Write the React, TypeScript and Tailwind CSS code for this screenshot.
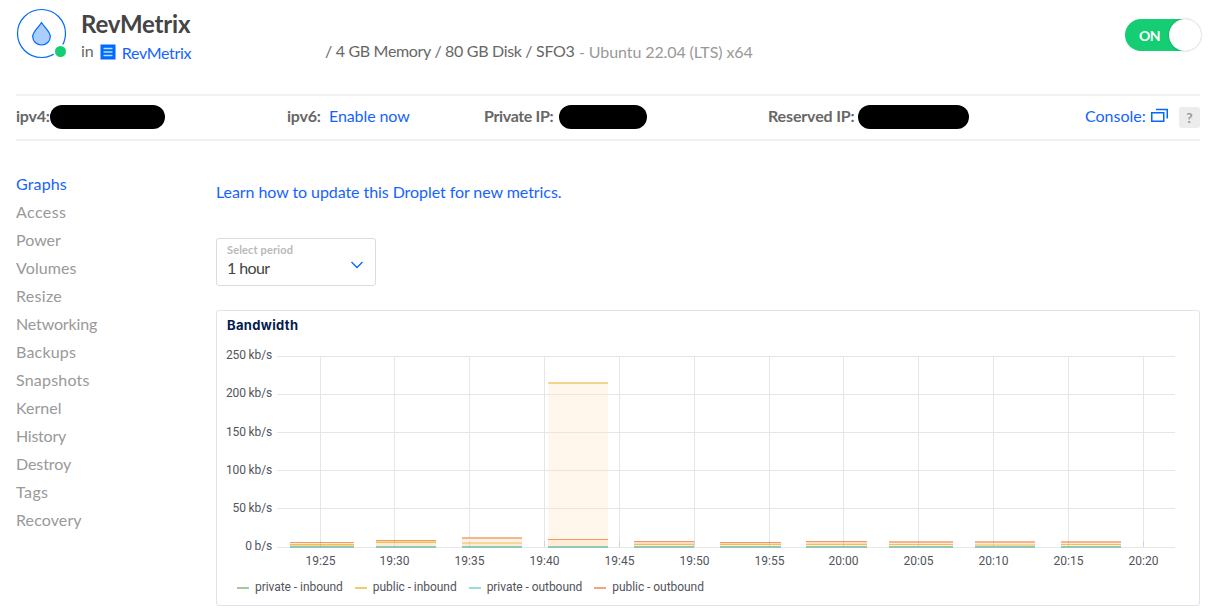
import React from "react";

const NAV: [string, string][] = [
  ["Graphs", "tracking-[0.15px] text-[#1463ff]"], ["Access", "tracking-[0.4px]"], ["Power", ""], ["Volumes", "tracking-[0.1px]"],
  ["Resize", "tracking-[0.3px]"], ["Networking", "tracking-[-0.15px]"], ["Backups", "tracking-[0.2px]"], ["Snapshots", "tracking-[0.2px]"],
  ["Kernel", ""], ["History", "tracking-[-0.25px]"], ["Destroy", "tracking-[-0.1px]"], ["Tags", "tracking-[0.4px]"], ["Recovery", "tracking-[0.1px]"],
];
const TICKS: [number, string][] = [
  [320, "19:25"], [394, "19:30"], [469, "19:35"], [544, "19:40"], [619, "19:45"], [694, "19:50"],
  [769, "19:55"], [843, "20:00"], [918, "20:05"], [993, "20:10"], [1068, "20:15"], [1143, "20:20"],
];
const ROWS: [number, number, string][] = [
  [356, 359, "250 kb/s"], [394, 397, "200 kb/s"], [432, 436, "150 kb/s"], [470, 474, "100 kb/s"], [508, 512, "50 kb/s"], [547, 550, "0 b/s"],
];

type Band = [number, number, string];
const O = "#f5985f", OL = "#f7b491", Y = "#f0c05c", YL = "#f6d896", C = "#fdecd6";
const BARS: { x: number; w: number; bands: Band[] }[] = [
  { x: 290, w: 64, bands: [[542, 1, O], [543, 1, C], [544, 1, Y], [545, 1, YL]] },
  { x: 376, w: 60, bands: [[540, 1, O], [541, 1, YL], [542, 1, Y], [543, 3, C]] },
  { x: 462, w: 60, bands: [[537, 2, OL], [539, 3, "#fdf1ea"], [542, 2, YL], [544, 2, C]] },
  { x: 548, w: 60, bands: [[382, 2, "#f3d68b"], [384, 155, "#fff7eb"], [539, 1, O], [540, 6, C]] },
  { x: 634, w: 60, bands: [[541, 1, O], [542, 2, "#fadcc4"], [544, 1, Y], [545, 1, C]] },
  { x: 720, w: 61, bands: [[542, 1, O], [543, 1, "#fadcc4"], [544, 1, Y], [545, 1, C]] },
  { x: 806, w: 61, bands: [[541, 1, O], [542, 2, "#fadcc4"], [544, 1, Y], [545, 1, C]] },
  { x: 889, w: 64, bands: [[541, 2, OL], [543, 1, C], [544, 1, Y], [545, 1, C]] },
  { x: 975, w: 60, bands: [[541, 2, OL], [543, 1, C], [544, 2, YL]] },
  { x: 1061, w: 60, bands: [[541, 2, OL], [543, 1, C], [544, 1, Y], [545, 1, C]] },
];

const LEGEND: [string, string][] = [
  ["private - inbound", "#a3c99a"], ["public - inbound", "#efcb6b"], ["private - outbound", "#9adbe8"], ["public - outbound", "#f4a67a"],
];

function Redacted({ className }: { className: string }) {
  return <span className={`mt-px block h-6 rounded-full bg-black ${className}`} />;
}

function Chart() {
  return (
    <svg className="block font-['Roboto',sans-serif]" width="982" height="234" viewBox="217 340 982 234" fontSize="12" fill="#52545c">
      <g shapeRendering="crispEdges">
        {ROWS.map(([y]) => <rect key={y} x="277" y={y} width="898" height="1" fill="#e6e6e6" />)}
        {TICKS.map(([x]) => <rect key={x} x={x} y="356" width="1" height="191" fill="#e6e6e6" />)}
        {BARS.map((b) => (
          <g key={b.x}>
            {b.bands.map(([y, h, c]) => <rect key={y} x={b.x} y={y} width={b.w} height={h} fill={c} />)}
            <rect x={b.x} y="546" width={b.w} height="2" fill="#90c8ba" />
          </g>
        ))}
        {ROWS.slice(1, 5).map(([y]) => <rect key={y} x="548" y={y} width="60" height="1" fill="#ebe4da" />)}
        {TICKS.map(([x]) => <rect key={x} x={x} y="541" width="1" height="6" fill="#000" fillOpacity="0.08" />)}
      </g>
      <g letterSpacing="-0.15">
        {ROWS.map(([, y, t]) => <text key={t} x="272" y={y} textAnchor="end">{t}</text>)}
      </g>
      {TICKS.map(([x, t]) => <text key={t} x={x + 0.5} y="565" textAnchor="middle">{t}</text>)}
    </svg>
  );
}

export default function App() {
  return (
    <div className="h-[611px] w-[1214px] overflow-hidden bg-white pr-3.5 pl-4 font-['Lato',sans-serif] text-[16px] text-[#676767]">
      <header className="flex h-[94px] items-start">
        <svg className="mt-2 h-[52px] w-[52px] shrink-0" viewBox="16 8 52 52">
          <circle cx="41.5" cy="33.5" r="24" fill="none" stroke="#0069ff" strokeWidth="1.2" />
          <path d="M41.500 22.500C39 27 32.700 31.500 32.700 36.500a8.800 8.500 0 0 0 17.600 0C50.300 31.500 44 27 41.500 22.500Z" fill="#a9ceff" stroke="#0069ff" strokeWidth="1.200" strokeLinejoin="round" />
          <circle cx="60.500" cy="51.500" r="7.500" fill="#fff" />
          <circle cx="60.500" cy="51.500" r="5.500" fill="#15cd72" />
        </svg>
        <div className="ml-[13px] w-[244px] pt-2">
          <h1 className="text-[24px] leading-8 font-bold tracking-[-0.2px] text-[#444]">RevMetrix</h1>
          <div className="flex h-[22px] items-center">
            <span>in</span>
            <svg className="mt-0.5 ml-1.5 h-4 w-4" viewBox="0 0 16 16">
              <rect x=".5" y=".5" width="15" height="15" fill="#0069ff" />
              <path d="M3.500 4.500h9M3.500 8h9M3.500 11.500h9" stroke="#b0e4ff" strokeWidth="1.500" />
            </svg>
            <a className="mt-[3px] ml-1.5 tracking-[-0.3px] text-[#1463ff]">RevMetrix</a>
          </div>
        </div>
        <div className="flex items-baseline pt-[39px]">
          <span className="w-[254px] tracking-[-0.32px] whitespace-pre">/ 4 GB Memory / 80 GB Disk / SFO3</span>
          <span className="relative top-px tracking-[-0.1px] whitespace-pre text-[#999]">- Ubuntu 22.04 (LTS) x64</span>
        </div>
        <div className="mt-[19px] ml-auto flex h-8 w-[75px] items-center rounded-full bg-[#15cd72] pl-3.5 text-[14px] font-bold tracking-[-0.5px] text-white">
          <span>ON</span>
          <span className="-mr-px ml-auto h-8 w-8 shrink-0 rounded-full bg-white shadow-[0_0_2px_rgba(0,0,0,0.3)]" />
        </div>
      </header>

      <section className="flex h-[47px] items-center border-y-2 border-[#f1f1f1] pb-[3px]">
        <div className="flex w-[271px] items-center"><b className="w-[34px] tracking-[-0.2px] whitespace-nowrap">ipv4:</b><Redacted className="w-[115px]" /></div>
        <div className="flex w-[197px] items-center"><b className="w-[42px] tracking-[-0.2px]">ipv6:</b><a className="tracking-[-0.1px] text-[#1463ff]">Enable now</a></div>
        <div className="flex w-[284px] items-center"><b className="w-[75px] tracking-[-0.35px] whitespace-nowrap">Private IP:</b><Redacted className="w-[88px]" /></div>
        <div className="flex w-[317px] items-center"><b className="w-[90px] tracking-[-0.15px] whitespace-nowrap">Reserved IP:</b><Redacted className="w-[111px]" /></div>
        <a className="w-[66px] text-[#1463ff]">Console:</a>
        <svg className="h-[18px] w-[18px]" viewBox="0 0 18 18" fill="none" stroke="#0069ff" strokeWidth="1.500">
          <rect x=".75" y="5.750" width="12" height="8.500" />
          <path d="M5 2.500h11.250v9" />
        </svg>
        <span className="mt-[3px] ml-auto flex h-[21px] w-[21px] items-center justify-center rounded-[3px] bg-[#ececec] text-[14px] font-bold text-[#999]">?</span>
      </section>

      <div className="flex">
        <nav className="w-[200px] shrink-0 pt-[29px] text-[#999]">
          {NAV.map(([n, c]) => <div key={n} className={`h-7 leading-7 ${c}`}>{n}</div>)}
        </nav>
        <main className="w-[984px] shrink-0">
          <a className="mt-[39px] block h-6 leading-6 tracking-[-0.07px] text-[#1463ff]">Learn how to update this Droplet for new metrics.</a>
          <div className="mt-[34px] flex h-12 w-40 items-center justify-between rounded-[3px] border border-[#dcdcdc] pr-3 pl-2.5">
            <div className="pb-[5px]">
              <div className="text-[11px] leading-4 font-bold tracking-[0.15px] text-[#b9b9b9]">Select period</div>
              <div className="leading-5 tracking-[-0.6px] text-[#444]">1 hour</div>
            </div>
            <svg className="mt-1.5 h-2 w-3" viewBox="0 0 12 8" fill="none" stroke="#0069ff" strokeWidth="1.300"><path d="M.5 1 6 6.500 11.500 1" /></svg>
          </div>
          <div className="mt-6 h-[296px] rounded-[3px] border border-[#e0e3ee]">
            <h2 className="h-[29px] pl-2.5 font-['Inter',sans-serif] text-[13px] leading-7 font-bold tracking-[0.35px] text-[#031b4e]">Bandwidth</h2>
            <Chart />
            <div className="flex h-[26px] items-center pl-5 font-['Roboto',sans-serif] text-[12px] tracking-[-0.05px] text-[#52545c]">
              {LEGEND.map(([t, c]) => (
                <div key={t} className="mr-3 flex items-center gap-1.5">
                  <span className="mt-0.5 h-0.5 w-3" style={{ background: c }} />
                  <span>{t}</span>
                </div>
              ))}
            </div>
          </div>
        </main>
      </div>
    </div>
  );
}
